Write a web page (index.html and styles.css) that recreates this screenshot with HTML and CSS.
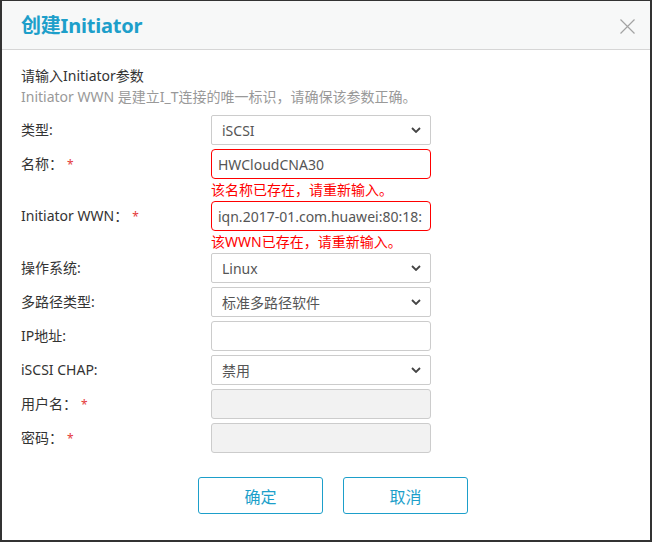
FILE: index.html
```html
<!DOCTYPE html>
<html lang="zh-CN">
<head>
<meta charset="utf-8">
<title>创建Initiator</title>
<link rel="stylesheet" href="styles.css">
</head>
<body>
<div class="dialog">
  <div class="header">
    <h1 class="title">创建Initiator</h1>
    <button class="close" type="button" aria-label="关闭">
      <svg width="15" height="15" viewBox="0 0 15 15"><path d="M0.5 0.5 L14.5 14.5 M14.5 0.5 L0.5 14.5" stroke="#a3a3a3" stroke-width="1.2" fill="none"/></svg>
    </button>
  </div>
  <div class="body">
    <p class="intro">请输入Initiator参数</p>
    <p class="hint">Initiator WWN 是建立I_T连接的唯一标识，请确保该参数正确。</p>
    <div class="form">
      <label class="label">类型:</label>
      <select class="field select"><option>iSCSI</option></select>

      <label class="label">名称：<span class="req">*</span></label>
      <input class="field input error-field" type="text" value="HWCloudCNA30">
      <span class="spacer"></span>
      <span class="error">该名称已存在，请重新输入。</span>

      <label class="label">Initiator WWN：<span class="req">*</span></label>
      <input class="field input error-field" type="text" value="iqn.2017-01.com.huawei:80:18:">
      <span class="spacer"></span>
      <span class="error">该WWN已存在，请重新输入。</span>

      <label class="label">操作系统:</label>
      <select class="field select"><option>Linux</option></select>

      <label class="label">多路径类型:</label>
      <select class="field select"><option>标准多路径软件</option></select>

      <label class="label">IP地址:</label>
      <input class="field input" type="text" value="">

      <label class="label">iSCSI CHAP:</label>
      <select class="field select"><option>禁用</option></select>

      <label class="label">用户名：<span class="req">*</span></label>
      <input class="field input" type="text" disabled>

      <label class="label">密码：<span class="req">*</span></label>
      <input class="field input" type="password" disabled>
    </div>
    <div class="actions">
      <button class="btn" type="button">确定</button>
      <button class="btn" type="button">取消</button>
    </div>
  </div>
</div>
</body>
</html>
```
FILE: styles.css
```css
* { box-sizing: border-box; }
html, body { margin: 0; padding: 0; background: #fff; }
body {
  font-family: "Noto Sans", "Noto Sans CJK SC", sans-serif;
  font-size: 14px;
  color: #333;
}
.dialog {
  width: 652px;
  height: 542px;
  border-style: solid;
  border-color: #333;
  border-width: 1px 2px 2px 2px;
  background: #fff;
  display: flex;
  flex-direction: column;
}
.header {
  height: 49px;
  flex: none;
  background: #f7f8f8;
  border-bottom: 1px solid #d6d6d6;
  display: flex;
  align-items: center;
  justify-content: space-between;
  padding: 0 15px 0 19px;
}
.title {
  margin: 0;
  font-size: 20px;
  font-weight: bold;
  color: #1d9fca;
  line-height: 48px;
  letter-spacing: -0.2px;
  padding-top: 1px;
}
.close {
  border: 0;
  background: none;
  padding: 0;
  width: 15px;
  height: 15px;
  display: flex;
  margin-top: 2px;
}
.body {
  padding: 15px 0 0 19px;
}
.intro, .hint {
  margin: 0;
  line-height: 21px;
}
.hint { color: #999; }
.form {
  margin-top: 8px;
  display: grid;
  grid-template-columns: 190px 220px;
  grid-auto-rows: auto;
  row-gap: 4px;
  align-items: center;
}
.label {
  line-height: 20px;
  color: #333;
}
.req {
  color: #e43a3a;
  font-size: 12px;
  margin-left: 4px;
}
.field {
  display: block;
  height: 30px;
  width: 220px;
  border: 1px solid #ccc;
  border-radius: 2px;
  background: #fff;
  font-family: inherit;
  font-size: 14px;
  color: #555;
  margin: 0;
  outline: none;
}
.input {
  padding: 0 6px;
  border-radius: 3px;
}
.input:disabled {
  background: #f2f2f2;
}
.error-field {
  border-color: #f00;
  border-radius: 4px;
}
.select {
  -webkit-appearance: none;
  appearance: none;
  padding: 0 24px 0 10px;
  background: #fff url("data:image/svg+xml;utf8,<svg xmlns='http://www.w3.org/2000/svg' width='10' height='6' viewBox='0 0 10 6'><path d='M1 1 L5 5 L9 1' stroke='%23444' stroke-width='1.8' fill='none'/></svg>") no-repeat right 9px center;
}
.spacer { display: block; height: 14px; }
.error {
  display: block;
  color: #f00;
  height: 14px;
  line-height: 14px;
  white-space: nowrap;
}
.actions {
  margin-top: 24px;
  padding-left: 177px;
  display: flex;
  gap: 20px;
}
.btn {
  width: 125px;
  height: 37px;
  border: 1px solid #1d9fca;
  border-radius: 3px;
  background: #fff;
  color: #1d9fca;
  font-family: inherit;
  font-size: 16px;
  padding: 0;
}
```
